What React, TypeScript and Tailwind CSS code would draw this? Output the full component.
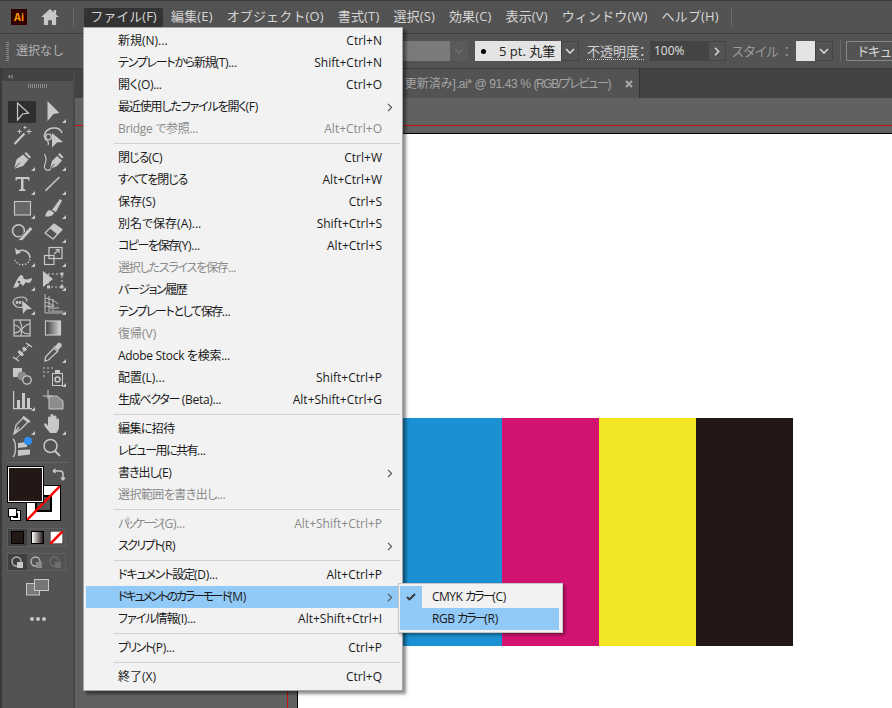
import React from "react";

const fontStack = "font-['Open_Sans','Noto_Sans_CJK_JP',sans-serif]";

type Item = { label?: string; key?: string; sub?: boolean; off?: boolean; hot?: boolean; sep?: boolean; tight?: string };

// tight: the original UI font sets kana narrower than Noto does
const menuItems: Item[] = [
  { label: "新規(N)...", key: "Ctrl+N" },
  { label: "テンプレートから新規(T)...", key: "Shift+Ctrl+N", tight: "tracking-[-1.25px]" },
  { label: "開く(O)...", key: "Ctrl+O", tight: "tracking-[-0.3px]" },
  { label: "最近使用したファイルを開く(F)", sub: true, tight: "tracking-[-1.15px]" },
  { label: "Bridge で参照...", key: "Alt+Ctrl+O", off: true, tight: "tracking-[-0.3px]" },
  { sep: true },
  { label: "閉じる(C)", key: "Ctrl+W", tight: "tracking-[-0.9px]" },
  { label: "すべてを閉じる", key: "Alt+Ctrl+W", tight: "tracking-[-1.1px]" },
  { label: "保存(S)", key: "Ctrl+S" },
  { label: "別名で保存(A)...", key: "Shift+Ctrl+S" },
  { label: "コピーを保存(Y)...", key: "Alt+Ctrl+S", tight: "tracking-[-1.5px]" },
  { label: "選択したスライスを保存...", off: true, tight: "tracking-[-1.2px]" },
  { label: "バージョン履歴", tight: "tracking-[-1.4px]" },
  { label: "テンプレートとして保存...", tight: "tracking-[-1.4px]" },
  { label: "復帰(V)", off: true },
  { label: "Adobe Stock を検索...", tight: "tracking-[-0.3px]" },
  { label: "配置(L)...", key: "Shift+Ctrl+P" },
  { label: "生成ベクター (Beta)...", key: "Alt+Shift+Ctrl+G", tight: "tracking-[-1.3px]" },
  { sep: true },
  { label: "編集に招待", tight: "tracking-[-0.6px]" },
  { label: "レビュー用に共有...", tight: "tracking-[-1.5px]" },
  { label: "書き出し(E)", sub: true, tight: "tracking-[-1px]" },
  { label: "選択範囲を書き出し...", off: true, tight: "tracking-[-0.55px]" },
  { sep: true },
  { label: "パッケージ(G)...", key: "Alt+Shift+Ctrl+P", off: true, tight: "tracking-[-2.4px]" },
  { label: "スクリプト(R)", sub: true, tight: "tracking-[-1.6px]" },
  { sep: true },
  { label: "ドキュメント設定(D)...", key: "Alt+Ctrl+P", tight: "tracking-[-1.15px]" },
  { label: "ドキュメントのカラーモード(M)", sub: true, hot: true, tight: "tracking-[-2.15px]" },
  { label: "ファイル情報(I)...", key: "Alt+Shift+Ctrl+I", tight: "tracking-[-1px]" },
  { sep: true },
  { label: "プリント(P)...", key: "Ctrl+P", tight: "tracking-[-1.55px]" },
  { sep: true },
  { label: "終了(X)", key: "Ctrl+Q" },
];

const topMenus = ["編集(E)", "オブジェクト(O)", "書式(T)", "選択(S)", "効果(C)", "表示(V)", "ウィンドウ(W)", "ヘルプ(H)"];

const Chevron = ({ dim }: { dim?: boolean }) => (
  <svg width="10" height="6" viewBox="0 0 10 6" fill="none" stroke={dim ? "#6e6e6e" : "#d8d8d8"} strokeWidth="1.6">
    <path d="M1 1l4 4 4-4" />
  </svg>
);

const Arrow = () => (
  <svg width="6" height="9" viewBox="0 0 6 9" fill="none" stroke="#555" strokeWidth="1.2">
    <path d="M1 .8l3.6 3.7L1 8.2" />
  </svg>
);

// every tool icon is drawn in a 24x24 box, the little triangle marks a flyout
const c = "#c8c8c8";
const bg = "#535353";
const toolIcons: { d: React.ReactNode; more?: boolean; active?: boolean }[] = [
  { active: true, d: <path d="M7.5 3l11 10-6 1-5 6z" fill="none" stroke={c} strokeWidth="1.2" /> },
  { more: true, d: <path d="M6.5 1l12 12-6 1-6 7z" fill={c} /> },
  {
    d: (
      <g stroke={c} fill="none">
        <path d="M4.5 20L14.5 9.5" strokeWidth="2.2" />
        <path d="M9.5 5.500v4M7.5 7.500h4M19 5v5M16.500 7.500h5M15 2v3M13.500 3.500h3" strokeWidth="1" />
      </g>
    ),
  },
  {
    d: (
      <g>
        <path d="M5 16C1 11 5 5 12 4c5-.5 8 1.500 9 5" fill="none" stroke={c} strokeWidth="1.5" />
        <path d="M5 16c2 1 3 3 2 5" fill="none" stroke={c} strokeWidth="1.2" />
        <circle cx="7.500" cy="13" r="2.800" fill="none" stroke={c} strokeWidth="1.3" />
        <path d="M11 9l11 9-6 .5-5 5z" fill={c} />
      </g>
    ),
  },
  {
    more: true,
    d: (
      <g fill={c}>
        <path d="M4 21l2.500-9.500L13 6.500l5.500 5-5.500 6.500z" />
        <path d="M14.500 5.500L16 4l5 5-1.500 1.500z" />
        <path d="M4 21l6-6.500" stroke={bg} strokeWidth="1" />
      </g>
    ),
  },
  {
    more: true,
    d: (
      <g>
        <path d="M9 21l2-8 5-5 5 4.500-5 5.500z" fill={c} />
        <path d="M17 6.500L18.500 5l4 4L21 10.500z" fill={c} />
        <path d="M9 21l4.500-5" stroke={bg} strokeWidth="1" />
        <path d="M10 21c-4 3-8 0-6-5 1.500-3 1.500-6-.5-10" fill="none" stroke={c} strokeWidth="1.2" />
      </g>
    ),
  },
  { more: true, d: <path d="M5.500 5h14v3.500h-1L17.500 7H13.500v10l2 .7V19h-6.500v-1.300l2-.7V7H7.500l-1 1.500h-1z" fill={c} /> },
  { more: true, d: <path d="M4.500 18.600L18.500 5" stroke={c} strokeWidth="1.5" /> },
  { more: true, d: <rect x="4.500" y="5.500" width="16" height="13.500" fill="#686868" stroke={c} strokeWidth="1.1" /> },
  {
    more: true,
    d: (
      <g fill={c}>
        <path d="M11 14L19 3l2 1.500-6 11.500z" />
        <path d="M4 20.500c1-1 .5-5.500 5-6.500l4 2.500c-.5 3.500-5 4.500-9 4z" />
      </g>
    ),
  },
  {
    d: (
      <g fill="none">
        <circle cx="8.500" cy="10.700" r="6" stroke={c} strokeWidth="1.6" />
        <path d="M8 20L20 6.500l3 2.500L12 21z" fill={c} stroke={bg} strokeWidth="1" />
      </g>
    ),
  },
  {
    more: true,
    d: (
      <g strokeLinejoin="round">
        <path d="M4 13L13 4l8 5.500-9 9.500z" fill="none" stroke={c} strokeWidth="1.3" />
        <path d="M9 8.500L13 4l8 5.500-4.500 5z" fill={c} />
      </g>
    ),
  },
  {
    more: true,
    d: (
      <g fill="none" stroke={c}>
        <path d="M7 8a8 8 0 0 1 13 6" strokeWidth="1.5" />
        <path d="M5 4l1 6.500 5-2z" fill={c} stroke="none" />
        <path d="M20 15a8 8 0 0 1-15 1" strokeDasharray="1.500 1.500" strokeWidth="1.3" />
      </g>
    ),
  },
  {
    more: true,
    d: (
      <g fill="none" stroke={c} strokeWidth="1.2">
        <rect x="3.500" y="11.500" width="9.500" height="9" />
        <rect x="8" y="3.500" width="13" height="11" />
        <path d="M13 10l4.500-4M14.500 5.500h3.500V9" />
      </g>
    ),
  },
  {
    more: true,
    d: (
      <g fill={c}>
        <path d="M3 20c2-3 4-11 8-13 3 0 2 3 3 4 3 1 5 0 8-1 0 3-2 5-4 5l-2-1-3 4-3-3-2 4z" />
        <circle cx="9" cy="14" r="1.300" fill={bg} />
      </g>
    ),
  },
  {
    more: true,
    d: (
      <g>
        <path d="M2 3l10 8-10 8z" fill={c} />
        <rect x="7" y="6" width="14" height="13" fill="none" stroke={c} strokeDasharray="2 2" />
        <path d="M19.500 4.500h3v3h-3zM19.500 17.500h3v3h-3zM6 17.500h3v3H6z" fill={c} />
      </g>
    ),
  },
  {
    more: true,
    d: (
      <g fill="none" stroke={c} strokeWidth="1.2">
        <path d="M3 11c0-3 3-6 8-6s6 2.500 6 4.500M13 15c-3 1-5 .5-7-.5L3 11" />
        <circle cx="7" cy="10.500" r=".8" fill={c} />
        <circle cx="10" cy="10.500" r=".8" fill={c} />
        <path d="M12 8.500l10 8.500-5.500.5-3.500 4.500z" fill={c} stroke="none" />
      </g>
    ),
  },
  {
    more: true,
    d: (
      <g fill="none" stroke={c} strokeWidth=".9">
        <path d="M4 2v19h19M4 6c6 1 10 3 13 6M4 10c4 1 6 2 9 4M8 4v16M12 7v13M4 14l9 1" />
        <path d="M9 15h9v2H9zM9 18.500h13v2H9z" fill="#8c8c8c" stroke="none" />
      </g>
    ),
  },
  {
    d: (
      <g fill="none" stroke={c}>
        <rect x="4" y="4" width="16" height="16" strokeWidth="1.2" />
        <path d="M4 9c4 0 6 3 8 6s5 3 8 3M20 8c-4 0-6 3-8 5s-5 4-8 4M10 4c0 3 2 6 2 8s-1 5-1 8" strokeWidth="1.1" />
      </g>
    ),
  },
  { d: <rect x="4.500" y="5" width="15" height="14" fill="url(#toolGrad)" stroke={c} strokeWidth="1.2" /> },
  {
    d: (
      <g stroke={c} fill={c}>
        <path d="M3 17l6 4M16 3l6 4" strokeWidth="1.5" fill="none" />
        <path d="M6 19L19 5" strokeWidth="1" />
        <path d="M8.500 11l4.500 4.500M13 7.500l3 3" strokeWidth="3" />
      </g>
    ),
  },
  {
    more: true,
    d: (
      <g fill="none" stroke={c}>
        <path d="M4 21l.5-4 8.500-9 3.500 3.500-9 8.500z" strokeWidth="1.3" />
        <path d="M12 6l2 .5 3-3.500c2-1 4.500 1 3.500 3.500L17.500 9.500l.5 2z" fill={c} stroke="none" />
      </g>
    ),
  },
  {
    d: (
      <g>
        <rect x="3" y="4" width="9" height="9" fill={c} />
        <circle cx="12" cy="12" r="4.500" fill="#8a8a8a" />
        <circle cx="17" cy="16" r="4.200" fill={bg} stroke={c} strokeWidth="1.3" />
      </g>
    ),
  },
  {
    more: true,
    d: (
      <g fill={c}>
        <rect x="11.500" y="9.500" width="10" height="12" fill="none" stroke={c} />
        <path d="M14 6h5v3.500h-5z" />
        <circle cx="16.500" cy="15.500" r="2.500" fill="none" stroke={c} strokeWidth="1.5" />
        <path d="M2 3h2v2H2zM6 3h2v2H6zM10 3h2v2h-2zM2 7h2v2H2zM6 7h2v2H6zM2 11h2v2H2z" fill="#8c8c8c" />
      </g>
    ),
  },
  {
    more: true,
    d: (
      <g fill={c}>
        <path d="M3 3h1.200v18H3zM3 20h19v1.200H3z" />
        <rect x="7" y="12" width="3" height="8" />
        <rect x="12" y="5" width="3" height="15" />
        <rect x="17" y="10" width="3" height="10" />
      </g>
    ),
  },
  {
    d: (
      <g>
        <path d="M8 8h8l6 5v8H8z" fill="#8c8c8c" stroke={c} strokeWidth="1" />
        <path d="M2 8h9M7 2v9" stroke={c} strokeWidth="1" />
      </g>
    ),
  },
  {
    more: true,
    d: (
      <g fill="none" stroke={c} strokeWidth="1.3">
        <path d="M4 22l2-9 7-7 5 4-7 7zM4 22l5-7" />
        <path d="M13 4.500l7 5.500" strokeWidth="2" />
      </g>
    ),
  },
  { more: true, d: <path d="M9 21c-2-3-6-7-6-9 1-2 3 0 4 2V6c0-2 2.500-2 2.500 0V3.500c0-2 3-2 3 0V5c0-2 3-2 3 0v3c0-2 2.500-2 2.500 0v6c0 4-1.500 5-2.500 7z" fill={c} /> },
  {
    d: (
      <g>
        <path d="M3 3c2 2 2.500 4 2.500 9S5 19 3 21" fill="none" stroke={c} strokeWidth="1.3" />
        <path d="M8 7l9-1v5l-9 1zM8 14l12-.5v5L8 20z" fill={c} />
        <circle cx="18" cy="5" r="4" fill="#2f8fef" />
      </g>
    ),
  },
  {
    d: (
      <g fill="none" stroke={c}>
        <circle cx="9.500" cy="10" r="6.500" strokeWidth="1.5" />
        <path d="M14 15l5 5" strokeWidth="2" />
      </g>
    ),
  },
];

const ToolIcon = ({ d, more, active }: { d: React.ReactNode; more?: boolean; active?: boolean }) => (
  <div className="flex h-6 items-center">
    <div className={`relative flex h-[22px] w-7 items-center justify-center rounded-[2px] ${active ? "bg-[#2f2f2f]" : ""}`}>
      <svg width="24" height="24" viewBox="0 0 24 24" className="shrink-0">
        <defs>
          <linearGradient id="toolGrad">
            <stop offset="0" stopColor="#3c3c3c" />
            <stop offset="1" stopColor="#d8d8d8" />
          </linearGradient>
        </defs>
        {d}
      </svg>
      {more && <span className="absolute bottom-0 right-[1px] h-0 w-0 border-b-[4px] border-l-[4px] border-b-[#c8c8c8] border-l-transparent" />}
    </div>
  </div>
);

const ToolPanel = () => (
  <div className="flex w-[75px] shrink-0 bg-[#484848]">
    <div className="w-[2px] bg-[#3a3a3a]" />
    <div className="flex w-[71px] flex-col bg-[#535353]">
      <div className="flex h-[12px] items-center bg-[#424242] pl-[6px] text-[9px] leading-none text-[#bdbdbd]">‹‹</div>
      <div className="flex h-[10px] items-center justify-center">
        <div className="h-[4px] w-[20px] bg-[repeating-linear-gradient(90deg,#8a8a8a_0_1px,transparent_1px_2px)]" />
      </div>
      <div className="grid grid-cols-[31px_31px] justify-items-center pl-[4px] pt-[9px]">
        {toolIcons.map((t, i) => (
          <ToolIcon key={i} {...t} />
        ))}
      </div>
      <div className="mx-[5px] mt-[2px] h-px bg-[#666]" />
      <div className="relative ml-[6px] mt-[4px] h-[55px]">
        <div className="absolute left-[18px] top-[18px] flex h-[36px] w-[35px] items-center justify-center border border-black bg-white">
          <div className="h-[17px] w-[17px] border-[2px] border-black bg-[#535353]" />
          <svg className="absolute inset-0" width="33" height="34" viewBox="0 0 33 34">
            <path d="M0 34L33 0" stroke="#f00" strokeWidth="2.4" />
          </svg>
        </div>
        <div className="absolute left-0 top-0 h-[35px] w-[35px] border-[1.5px] border-white bg-[#231815] outline outline-1 outline-black" />
        <svg className="absolute left-[44px] top-[1px]" width="13" height="13" viewBox="0 0 13 13" fill="none" stroke="#c8c8c8" strokeWidth="1.5">
          <path d="M1 3h7c2 0 3 1 3 3v6M1 3l2.500-2M1 3l2.500 2M11 12l-2-2.500M11 12l2-2.500" />
        </svg>
        <div className="absolute left-[3px] top-[44px] h-[9px] w-[9px] border-[2px] border-white bg-black outline outline-1 outline-black" />
        <div className="absolute left-0 top-[41px] h-[9px] w-[9px] border border-black bg-white" />
      </div>
      <div className="ml-[5px] mt-[6px] flex h-[19px] w-[59px] border border-[#5f5f5f]">
        <div className="flex w-[19px] items-center justify-center bg-[#404040]">
          <div className="h-[13px] w-[13px] border border-black bg-[#231815]" />
        </div>
        <div className="flex w-[20px] items-center justify-center">
          <div className="h-[13px] w-[13px] border border-black bg-[linear-gradient(90deg,#fff,#231815)]" />
        </div>
        <div className="flex w-[18px] items-center justify-center">
          <svg width="13" height="13" viewBox="0 0 13 13">
            <rect width="13" height="13" fill="#fff" stroke="#000" />
            <path d="M0 13L13 0" stroke="#f00" strokeWidth="2.6" />
          </svg>
        </div>
      </div>
      <div className="ml-[5px] mt-[6px] flex h-[18px] w-[59px] border border-[#5f5f5f]">
        {[0, 1, 2].map((n) => (
          <div key={n} className={`flex w-[19px] items-center justify-center ${n === 0 ? "bg-[#404040]" : ""}`}>
            <svg width="13" height="13" viewBox="0 0 13 13">
              <circle cx="5.500" cy="5.500" r="4.500" fill="none" stroke={n === 2 ? "#6e6e6e" : "#b4b4b4"} strokeWidth="1.4" />
              <rect x="6" y="6" width="6" height="6" fill={n === 0 ? "#c8c8c8" : n === 1 ? "#8a8a8a" : "#6e6e6e"} />
            </svg>
          </div>
        ))}
      </div>
      <div className="mt-[8px] flex justify-center">
        <svg width="23" height="17" viewBox="0 0 23 17" fill="#7a7a7a" stroke="#c8c8c8" strokeWidth="1">
          <rect x=".5" y="4.500" width="13" height="11.500" />
          <rect x="8.500" y=".5" width="14" height="11" fill="#757575" />
        </svg>
      </div>
      <div className="mt-[21px] flex justify-center gap-[2px]">
        <span className="h-[4px] w-[4px] rounded-full bg-[#c8c8c8]" />
        <span className="h-[4px] w-[4px] rounded-full bg-[#c8c8c8]" />
        <span className="h-[4px] w-[4px] rounded-full bg-[#c8c8c8]" />
      </div>
    </div>
  </div>
);

// squeeze the words of a label harder than its "(X)..." tail
const MenuLabel = ({ label, tight }: { label: string; tight?: string }) => {
  if (!tight) return <>{label}</>;
  const parts = label.match(/^(.*?)( ?\(.*|\.\.\.)$/);
  if (!parts) return <span className={tight}>{label}</span>;
  return (
    <>
      <span className={tight}>{parts[1]}</span>
      <span className="tracking-[-0.3px]">{parts[2]}</span>
    </>
  );
};

const FileMenu = () => (
  <div className="absolute left-[83px] top-[27px] z-20 w-[320px] border border-[#a6a6a6] bg-[#f2f2f2] py-[2px] pl-[2px] pr-[5px] text-[12px] text-[#1a1a1a] shadow-[3px_3px_3px_rgba(0,0,0,0.45)]">
    {menuItems.map((m, i) =>
      m.sep ? (
        <div key={i} className="-mr-[3px] flex h-[7px] items-center pl-[28px]">
          <div className="h-[1px] w-full bg-[#d0d0d0]" />
        </div>
      ) : (
        <div key={i} className={`flex h-[22px] items-center pl-[32px] leading-none ${m.hot ? "mr-[-5px] bg-[#91c9f7]" : ""} ${m.off ? "text-[#8a8a8a]" : ""}`}>
          <span className="flex-1 whitespace-nowrap [font-feature-settings:'palt']">
            <MenuLabel label={m.label || ""} tight={m.tight} />
          </span>
          {m.key && <span className="mr-[15px] whitespace-nowrap">{m.key}</span>}
          {m.sub && (
            <span className={`flex ${m.hot ? "mr-[9px]" : "mr-[4px]"}`}>
              <Arrow />
            </span>
          )}
        </div>
      )
    )}
  </div>
);

const ColorSubmenu = () => (
  <div className="absolute left-[398px] top-[583px] z-30 w-[165px] border border-[#c8c8c8] bg-[#f2f2f2] py-[2px] pl-[1px] pr-[3px] text-[12px] text-[#1a1a1a] shadow-[2px_2px_3px_rgba(0,0,0,0.4)] [font-feature-settings:'palt']">
    <div className="flex h-[22px] items-center leading-none">
      <div className="flex h-full w-[22px] items-center justify-center bg-[#91c9f7]">
        <svg width="10" height="8" viewBox="0 0 10 8" fill="none" stroke="#333" strokeWidth="1.8">
          <path d="M1 4l2.500 2.500L9 1" />
        </svg>
      </div>
      <span className="ml-[10px] whitespace-pre">
        <span className="tracking-[-0.5px]">CMYK </span>
        <span className="tracking-[-2px]">カラー</span>
        <span className="tracking-[-0.3px]">(C)</span>
      </span>
    </div>
    <div className="flex h-[22px] items-center whitespace-pre bg-[#91c9f7] pl-[32px] leading-none">
      <span className="tracking-[-0.5px]">RGB </span>
      <span className="tracking-[-2px]">カラー</span>
      <span className="tracking-[-0.3px]">(R)</span>
    </div>
  </div>
);

const Canvas = () => (
  <div className="relative flex-1 overflow-hidden bg-[#616161]">
    <div className="absolute left-[212px] top-0 h-full w-px bg-[#c81010]" />
    <div className="absolute left-0 top-[27px] h-px w-full bg-[#c81010]" />
    <div className="absolute left-[222px] top-[35px] h-full w-full border-l border-t border-black bg-white" />
    {/* artboard colour bars */}
    <div className="absolute left-[233px] top-[320px] flex h-[228px]">
      <div className="w-[194px] bg-[#1b91d3]" />
      <div className="w-[97px] bg-[#d31372]" />
      <div className="w-[97px] bg-[#f2e626]" />
      <div className="w-[97px] bg-[#231815]" />
    </div>
  </div>
);

export default function App() {
  return (
    <div className={`relative flex h-[708px] w-[892px] flex-col overflow-hidden bg-[#535353] ${fontStack}`}>
      <div className="flex h-[34px] shrink-0 items-center border-y border-y-[#3c3c3c] bg-[#535353] text-[13px] text-[#d6d6d6]">
        <div className="ml-[11px] flex h-[16px] w-[16px] items-center justify-center bg-[#330000] text-[10px] font-bold leading-none text-[#ff9a00]">Ai</div>
        <svg className="ml-[14px]" width="18" height="16" viewBox="0 0 19 17" fill="#c8c8c8">
          <path d="M9.500 0L0 8.500h3V17h4.500v-5h4v5H16V8.500h3L16 5.800V1h-2.500v2.500z" />
        </svg>
        <div className="ml-[14px] h-[20px] w-[1px] bg-[#6a6a6a]" />
        <div className="ml-[10px] flex h-[19px] w-[79px] items-center justify-center rounded-[2px] bg-[#333333] pb-[2px] leading-none">ファイル(F)</div>
        <div className="mb-[2px] ml-[8px] flex gap-[14px] whitespace-nowrap leading-none tracking-[0.15px]">
          {topMenus.map((t) => (
            <span key={t}>{t}</span>
          ))}
        </div>
        <div className="ml-[12px] h-[20px] w-[1px] bg-[#6a6a6a]" />
      </div>

      <div className="flex h-[35px] shrink-0 items-center border-b border-[#3c3c3c] bg-[#535353] text-[13px] text-[#b4b4b4] [font-feature-settings:'palt']">
        <div className="ml-[6px] h-[20px] w-[3px] shrink-0 bg-[repeating-linear-gradient(0deg,#8a8a8a_0_1px,transparent_1px_2px)]" />
        <span className="ml-[7px] w-[48px] shrink-0 whitespace-nowrap text-[12px] leading-none [font-feature-settings:normal]">選択なし</span>
        <div className="ml-[339px] flex h-[20px] w-[65px] shrink-0 items-center justify-end bg-[#7a7a7a]">
          <div className="flex h-full w-[18px] items-center justify-center bg-[#5a5a5a]">
            <Chevron dim />
          </div>
        </div>
        <div className="ml-[7px] flex h-[20px] w-[86px] shrink-0 items-center bg-[#e3e3e3] pl-[6px] leading-none text-[#222]">
          <span className="h-[5px] w-[5px] shrink-0 rounded-full bg-black" />
          <span className="ml-[13px] whitespace-nowrap">5 pt. 丸筆</span>
        </div>
        <div className="flex h-[20px] w-[18px] shrink-0 items-center justify-center border border-[#444]">
          <Chevron />
        </div>
        <span className="ml-[8px] w-[57px] shrink-0 whitespace-nowrap border-b border-dotted border-[#c8c8c8] leading-[16px] text-[#d0d0d0]">不透明度：</span>
        <div className="ml-[6px] flex h-[20px] w-[58px] shrink-0 items-center bg-[#444444] pl-[4px] text-[12px] leading-none text-[#e0e0e0]">100%</div>
        <div className="flex h-[20px] w-[18px] shrink-0 items-center justify-center border border-[#444]">
          <svg width="6" height="9" viewBox="0 0 6 9" fill="none" stroke="#d8d8d8" strokeWidth="1.6">
            <path d="M1 .8l3.600 3.700L1 8.200" />
          </svg>
        </div>
        <div className="ml-[6px] flex w-[58px] shrink-0 justify-between whitespace-nowrap leading-none text-[#9a9a9a]">
          <span>スタイル</span>
          <span>：</span>
        </div>
        <div className="ml-[6px] h-[20px] w-[19px] shrink-0 bg-[#e3e3e3]" />
        <div className="flex h-[20px] w-[18px] shrink-0 items-center justify-center border border-[#444]">
          <Chevron />
        </div>
        <div className="ml-[7px] h-[22px] w-px shrink-0 bg-[#6a6a6a]" />
        <div className="ml-[5px] flex h-[20px] w-[60px] shrink-0 items-center rounded-l-[2px] border border-r-0 border-[#8a8a8a] pl-[11px] leading-none whitespace-nowrap text-[#d6d6d6]">ドキュ</div>
      </div>

      <div className="flex min-h-0 flex-1">
        <ToolPanel />
        <div className="flex min-w-0 flex-1 flex-col">
          <div className="flex h-[29px] shrink-0 items-center bg-[#424242] pl-[8px]">
            <div className="flex h-full w-[557px] items-center justify-end border-r border-[#333] bg-[#535353] pr-[6px] font-['Liberation_Sans','Noto_Sans_CJK_JP',sans-serif] text-[12px] leading-none text-[#a5a5a5] [font-feature-settings:'palt']">
              <span className="whitespace-pre">
                更新済み]<span className="tracking-[-0.4px]">.ai* @ 91.43 % </span>
                <span className="tracking-[-1.4px]">(RGB/プレビュー)</span>
              </span>
              <svg className="ml-[15px]" width="8" height="8" viewBox="0 0 8 8" stroke="#a8a8a8" strokeWidth="2">
                <path d="M1 1l6 6M7 1L1 7" />
              </svg>
            </div>
          </div>
          <Canvas />
        </div>
      </div>

      <FileMenu />
      <ColorSubmenu />
    </div>
  );
}
